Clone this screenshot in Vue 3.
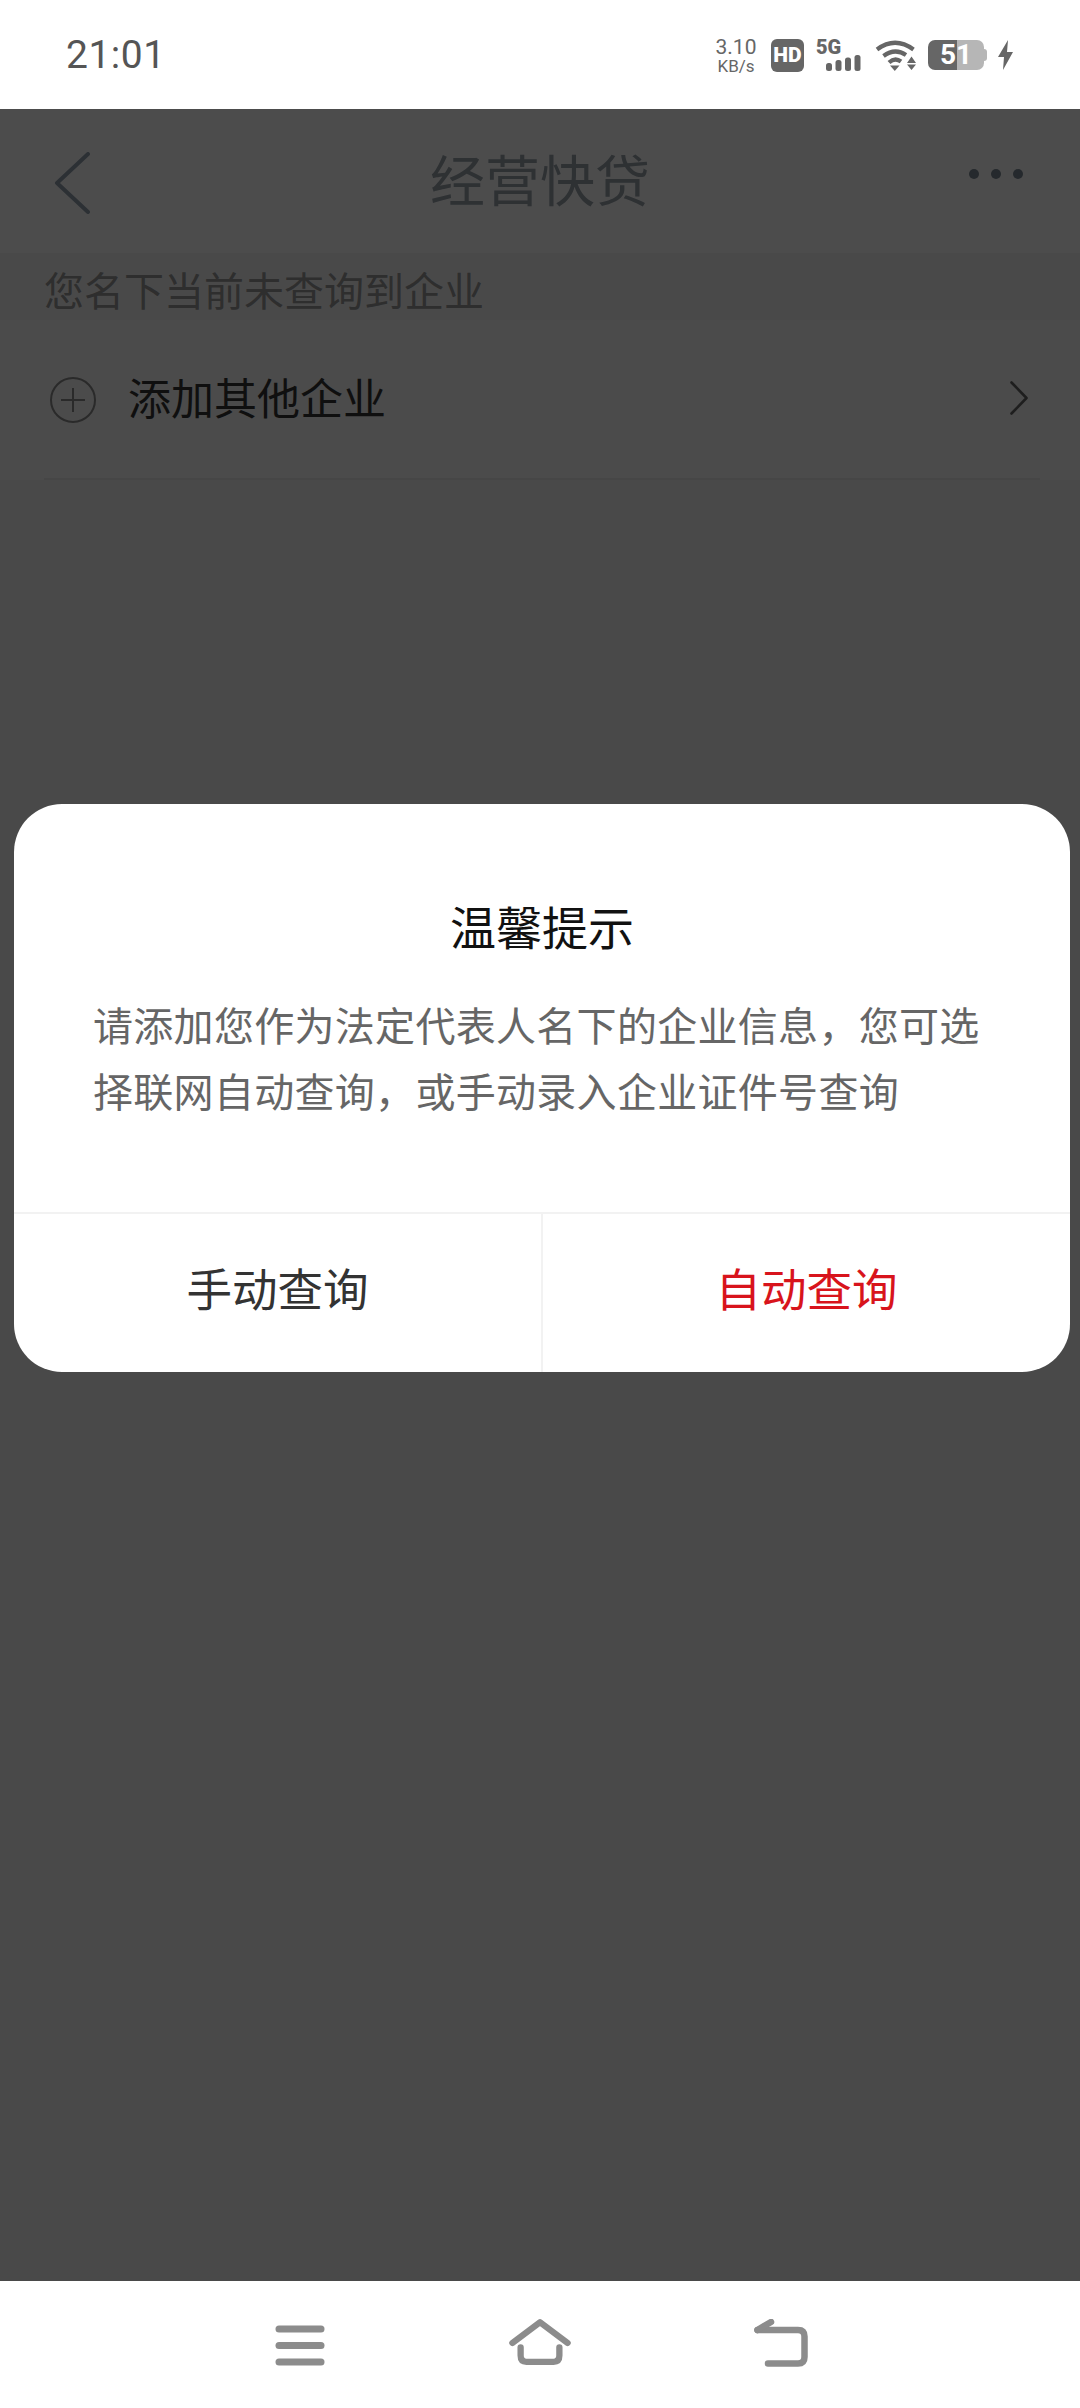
<template>
  <div class="screen">
    <header class="status">
      <span class="clock">21:01</span>
      <div class="status-icons">
        <div class="speed"><span class="speed-num">3.10</span><span class="speed-unit">KB/s</span></div>
        <span class="hd">HD</span>
        <div class="net">
          <span class="net-label">5G</span>
          <svg class="bars" width="35" height="16" viewBox="0 0 35 16">
            <rect x="0" y="8" width="6" height="8" rx="2.500" />
            <rect x="9.500" y="5" width="6" height="11" rx="2.500" />
            <rect x="19" y="2.500" width="6" height="13.500" rx="2.500" />
            <rect x="28.500" y="0" width="6" height="16" rx="2.500" />
          </svg>
        </div>
        <svg class="wifi" width="41" height="31" viewBox="0 0 41 31" fill="none" stroke="#666" stroke-width="4.200">
          <path d="M2 9.500 Q 20 -4 38.500 9.500" />
          <path d="M8.500 16 Q 20 7.500 31 15" />
          <path d="M14 22.500 Q 20 17 26 21.500" />
          <path d="M15 25.500 H 24.500 L 19.800 31 Z" fill="#666" stroke="none" />
          <path d="M36.500 16.500 L 41 23 H 32 Z M 32 24.500 H 41 L 36.500 30 Z" fill="#666" stroke="none" />
        </svg>
        <div class="battery"><span class="battery-cell">51</span><i class="battery-nub"></i></div>
        <svg class="bolt" width="15" height="30" viewBox="0 0 15 30"><path d="M10 0 L 0 17 H 6 L 5 30 L 15 12 H 9 Z" fill="#666" /></svg>
      </div>
    </header>

    <main class="main">
      <section class="app-head">
        <svg class="back" width="36" height="62" viewBox="0 0 36 62" fill="none">
          <path d="M34 2 L 3 31 L 34 60" stroke="#94a2b0" stroke-width="4" stroke-linecap="round" stroke-linejoin="round" />
        </svg>
        <h1 class="title">经营快贷</h1>
        <div class="dots"><i></i><i></i><i></i></div>
      </section>

      <section class="content">
        <p class="hint">您名下当前未查询到企业</p>
        <div class="row">
          <svg class="plus" width="46" height="46" viewBox="0 0 46 46" fill="none" stroke="#8c8c8c" stroke-width="2">
            <circle cx="23" cy="23" r="22" />
            <path d="M11 23 H 35 M 23 11 V 35" />
          </svg>
          <span class="row-label">添加其他企业</span>
          <svg class="chev" width="18" height="34" viewBox="0 0 18 34" fill="none">
            <path d="M1.500 1.500 L 16.500 17 L 1.500 32.500" stroke="#666" stroke-width="2.600" stroke-linecap="round" stroke-linejoin="round" />
          </svg>
        </div>
      </section>

      <div class="overlay">
        <div class="dialog">
          <h2 class="dialog-title">温馨提示</h2>
          <p class="dialog-body">请添加您作为法定代表人名下的企业信息，您可选择联网自动查询，或手动录入企业证件号查询</p>
          <div class="actions">
            <button class="action">手动查询</button>
            <button class="action primary">自动查询</button>
          </div>
        </div>
      </div>
    </main>

    <nav class="navbar">
      <svg class="nav-menu" width="50" height="42" viewBox="0 0 50 42">
        <rect x="0.500" y="0.500" width="49" height="7" rx="3.500" />
        <rect x="0.500" y="17" width="49" height="7" rx="3.500" />
        <rect x="0.500" y="33.500" width="49" height="7" rx="3.500" />
      </svg>
      <svg class="nav-home" width="62" height="48" viewBox="0 0 64 48" fill="none" stroke="#8c8c8c" stroke-width="6.500" stroke-linecap="round" stroke-linejoin="round">
        <path d="M3.500 25 L 32 3.500 L 60.500 25" />
        <path d="M12 29.500 V 38 Q 12 44.500 18 44.500 H 46 Q 52 44.500 52 38 V 29.500" />
      </svg>
      <svg class="nav-back" width="54" height="48" viewBox="0 0 54 48" fill="none" stroke="#8c8c8c" stroke-width="6.500" stroke-linecap="round" stroke-linejoin="round">
        <path d="M3.500 11 H 44 Q 50.500 11 50.500 17.500 V 38 Q 50.500 44.500 44 44.500 H 14" />
        <path d="M3.500 11 L 17 3" />
      </svg>
    </nav>
  </div>
</template>

<script setup>
</script>

<style scoped>
.screen {
  width: 1080px;
  height: 2408px;
  display: flex;
  flex-direction: column;
  overflow: hidden;
  background: #fff;
  font-family: "Noto Sans CJK SC", "Noto Sans", sans-serif;
}
.status {
  height: 109px;
  flex: none;
  display: flex;
  align-items: center;
  justify-content: space-between;
  padding: 0 67px 0 66px;
  box-sizing: border-box;
  background: #fff;
  color: #666;
}
.clock {
  font-family: Roboto, "Noto Sans", sans-serif;
  font-size: 39px;
  color: #555;
  letter-spacing: 0.5px;
}
.status-icons {
  display: flex;
  align-items: center;
  height: 34px;
  padding-top: 1px;
}
.speed {
  display: flex;
  flex-direction: column;
  align-items: center;
  font-family: Roboto, sans-serif;
  margin-right: 16px;
  width: 38px;
  white-space: nowrap;
}
.speed-num { font-size: 21px; line-height: 22px; }
.speed-unit { font-size: 17px; line-height: 17px; }
.hd {
  width: 33px;
  height: 33px;
  border-radius: 6px;
  background: #666;
  color: #fff;
  font: 900 21px/33px Roboto, sans-serif;
  text-align: center;
  margin-right: 12px;
}
.net {
  position: relative;
  width: 45px;
  height: 33px;
  margin-right: 14px;
}
.net-label {
  position: absolute;
  left: 0;
  top: -1px;
  color: #666;
  font: 900 20px/19px Roboto, sans-serif;
}
.bars {
  position: absolute;
  left: 10px;
  bottom: 1px;
  fill: #666;
}
.wifi { margin-right: 12px; }
.battery {
  position: relative;
  width: 59px;
  height: 30px;
  margin-right: 11px;
}
.battery-cell {
  display: block;
  width: 56px;
  height: 30px;
  border-radius: 7px;
  background: linear-gradient(to right, #666 52%, #b6b6b6 52%);
  color: #fff;
  font: 700 28px/30px Roboto, sans-serif;
  text-align: center;
}
.battery-nub {
  position: absolute;
  right: 0;
  top: 9px;
  width: 4px;
  height: 12px;
  border-radius: 0 3px 3px 0;
  background: #b6b6b6;
}
.main {
  position: relative;
  flex: 1;
  background: #f6f6f6;
}
.app-head {
  height: 144px;
  box-sizing: border-box;
  display: flex;
  align-items: center;
  justify-content: space-between;
  position: relative;
  background: #fff;
  padding: 0 57px 8px 54px;
}
.title {
  position: absolute;
  left: 0;
  right: 0;
  top: 32px;
  margin: 0;
  text-align: center;
  font-size: 55px;
  line-height: 72px;
  font-weight: 400;
  color: #9aa3ac;
}
.back { position: relative; top: 6px; }
.dots {
  display: flex;
  gap: 12px;
  position: relative;
  top: -3px;
}
.dots i {
  display: block;
  width: 10px;
  height: 10px;
  border-radius: 50%;
  background: #7c8996;
}
.content {
  height: 227px;
  padding: 0;
}
.hint {
  margin: 0;
  height: 67px;
  padding-left: 44px;
  font-size: 40px;
  line-height: 72px;
  color: #999;
}
.row {
  height: 160px;
  display: flex;
  align-items: center;
  background: #fafafa;
  box-sizing: border-box;
  padding: 0 52px 0 50px;
  position: relative;
}
.row::after {
  content: "";
  position: absolute;
  left: 44px;
  right: 40px;
  bottom: 0;
  height: 2px;
  background: #ebebeb;
}
.row-label {
  flex: 1;
  margin-left: 32px;
  margin-bottom: 8px;
  font-size: 43px;
  color: #353535;
}
.chev { flex: none; margin-bottom: 4px; }
.overlay {
  position: absolute;
  inset: 0;
  padding: 695px 10px 0 14px;
  box-sizing: border-box;
  background: rgba(0, 0, 0, 0.7);
}
.dialog {
  height: 568px;
  display: flex;
  flex-direction: column;
  background: #fff;
  border-radius: 48px;
  overflow: hidden;
}
.dialog-title {
  margin: 91px 0 0;
  text-align: center;
  font-size: 46px;
  line-height: 60px;
  font-weight: 400;
  color: #111;
}
.dialog-body {
  margin: 36px 0 0;
  padding: 0 79px;
  flex: 1;
  font-size: 40px;
  line-height: 66px;
  letter-spacing: 0.3px;
  color: #666;
}
.actions {
  height: 158px;
  display: flex;
  border-top: 2px solid #f2f2f2;
}
.action {
  flex: 1;
  border: 0;
  padding: 0 0 12px;
  background: none;
  font: 400 45.500px "Noto Sans CJK SC", sans-serif;
  color: #333;
}
.action + .action { border-left: 2px solid #f2f2f2; }
.primary { color: #d8141c; }
.navbar {
  height: 127px;
  flex: none;
  display: flex;
  align-items: flex-start;
  background: #fff;
  padding-top: 37px;
  box-sizing: border-box;
  padding-left: 275px;
  fill: #8c8c8c;
}
.nav-menu { margin-top: 7px; }
.nav-home { margin-left: 184px; }
.nav-back { margin-left: 183px; margin-top: 1px; }
</style>
